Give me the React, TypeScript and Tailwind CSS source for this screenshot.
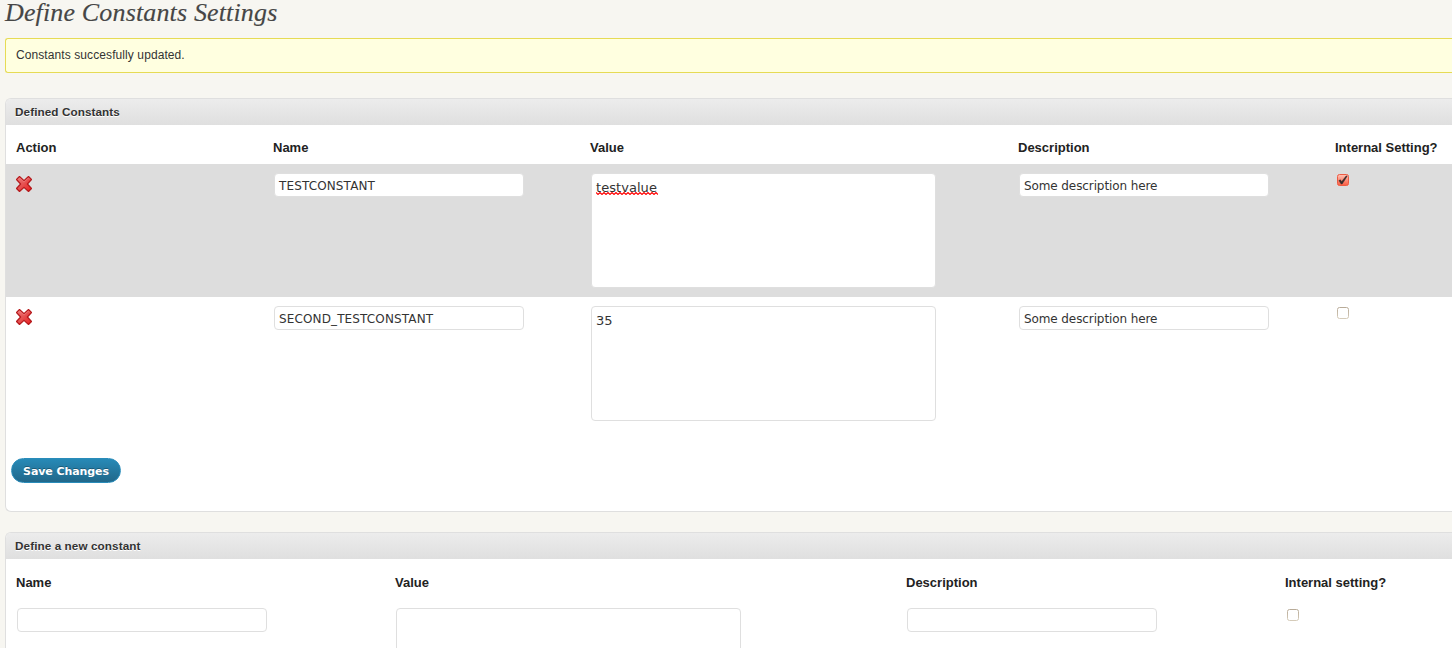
import React from "react";

const SANS = "font-['Liberation_Sans',Arial,sans-serif]";
const DEJAVU = "font-['DejaVu_Sans',Verdana,sans-serif]";

function DeleteIcon() {
  return (
    <svg width="16" height="16" viewBox="0 0 16 16" className="block" role="img" aria-label="Delete">
      <defs>
        <linearGradient id="deleteFill" x1="0" y1="0" x2="1" y2="1">
          <stop offset="0" stopColor="#f08080" />
          <stop offset="0.5" stopColor="#e64f4f" />
          <stop offset="1" stopColor="#ee1c1c" />
        </linearGradient>
      </defs>
      <path
        d="M3.5 .5 L8 4.6 L12.5 .5 L15.5 3.5 L11.4 8 L15.5 12.5 L12.5 15.5 L8 11.4 L3.5 15.5 L.5 12.5 L4.6 8 L.5 3.5 Z"
        fill="url(#deleteFill)"
        stroke="#b5191c"
        strokeWidth="1.2"
        strokeLinejoin="round"
      />
      <path d="M2 3.7 L3.6 2 L8 6.1 L12.4 2 L13.8 3.5" fill="none" stroke="#f08888" strokeWidth=".6" />
    </svg>
  );
}

function Checkbox({ checked = false }: { checked?: boolean }) {
  return (
    <svg width="12" height="12" viewBox="0 0 12 12" className="block" role="checkbox" aria-checked={checked}>
      <defs>
        <linearGradient id="checkedFill" x1="0" y1="0" x2="0" y2="1">
          <stop offset="0" stopColor="#ffc4b7" />
          <stop offset="1" stopColor="#fa5b40" />
        </linearGradient>
        <linearGradient id="uncheckedEdge" x1="0" y1="0" x2="0" y2="1">
          <stop offset="0" stopColor="#b8ab98" />
          <stop offset="1" stopColor="#d5cbb9" />
        </linearGradient>
      </defs>
      <rect
        x=".5"
        y=".5"
        width="11"
        height="11"
        rx="2"
        fill={checked ? "url(#checkedFill)" : "#fff"}
        stroke={checked ? "#ed5a42" : "url(#uncheckedEdge)"}
      />
      {checked && (
        <path
          d="M1.8 6.6 L3.4 5.8 L4.7 7.6 L9.2 1.8 L10.2 2.2 L5.2 10 L4.1 10 Z"
          fill="#3b2c2a"
          stroke="#3b2c2a"
          strokeWidth=".4"
        />
      )}
    </svg>
  );
}

function TextInput({ value = "", tracking = "tracking-normal" }: { value?: string; tracking?: string }) {
  return (
    <div
      role="textbox"
      className={`ml-px h-6 w-[250px] rounded-[4px] border border-[#dfdfdf] bg-white px-1 text-[12px] leading-[24px] whitespace-nowrap text-[#333] ${DEJAVU} ${tracking}`}
    >
      {value}
    </div>
  );
}

// Zigzag underline, four pixels per wave.
const squiggle = "M0 .5" + Array.from({ length: 31 }, (_, i) => `L${i * 2 + 2} ${i % 2 === 0 ? 2.5 : 0.5}`).join("");

function TextArea({ value = "", misspelled = false }: { value?: string; misspelled?: boolean }) {
  return (
    <div
      role="textbox"
      aria-multiline
      className={`ml-px h-[115px] w-[345px] rounded-[4px] border border-[#dfdfdf] bg-white px-1 pt-[5px] text-[13px] leading-[18px] text-[#333] ${DEJAVU}`}
    >
      <span className="relative inline-block tracking-[0.05px]">
        {value}
        {misspelled && (
          <svg width="62" height="3" viewBox="0 0 62 3" className="absolute bottom-[2px] left-0 text-[#ff0000]">
            <path d={squiggle} fill="none" stroke="currentColor" strokeWidth="1.1" />
          </svg>
        )}
      </span>
    </div>
  );
}

function PanelHeader({ children }: { children: React.ReactNode }) {
  return (
    <h3 className="h-[26px] rounded-tl-[5px] bg-linear-to-b from-[#ececec] to-[#dfdfdf] pl-[9px] text-[11.7px] leading-[26px] font-bold text-[#333] [text-shadow:0_1px_0_#fff]">
      <span className="inline-block tracking-[0.1px]">{children}</span>
    </h3>
  );
}

const constants = [
  { name: "TESTCONSTANT", value: "testvalue", description: "Some description here", internal: true },
  { name: "SECOND_TESTCONSTANT", value: "35", description: "Some description here", internal: false },
];

const definedGrid = "grid grid-cols-[257px_317px_428px_317px_1fr]";
const newGrid = "grid grid-cols-[379px_511px_379px_1fr]";
const headCells = "pl-[10px] text-[13px] leading-[18px] font-bold text-[#222] whitespace-nowrap";

export default function App() {
  return (
    <div className={`h-[648px] w-full overflow-hidden bg-[#f7f6f1] pl-[5px] ${SANS}`}>
      <h1 className="h-[38px] text-[26px] leading-[26px] whitespace-nowrap text-[#464646] italic font-['Liberation_Serif',Georgia,serif]">
        <span className="inline-block tracking-[0.15px] [-webkit-text-stroke:0.15px_#464646]">Define Constants Settings</span>
      </h1>

      <div className="h-[35px] rounded-l-[3px] border border-r-0 border-[#e6db55] bg-[#ffffe0] pl-[10px] text-[12px] leading-[33px] text-[#333]">
        <span className="inline-block tracking-[0.09px]">Constants succesfully updated.</span>
      </div>

      <section className="mt-[25px] h-[414px] rounded-l-[6px] border border-r-0 border-[#dfdfdf] bg-white">
        <PanelHeader>Defined Constants</PanelHeader>
        <div className={`${definedGrid} ${headCells} h-[39px] pt-[14px]`}>
          <span>Action</span>
          <span>Name</span>
          <span>Value</span>
          <span>Description</span>
          <span>Internal Setting?</span>
        </div>
        {constants.map((c, i) => (
          <div key={c.name} className={`${definedGrid} h-[133px] pt-[9px] pl-[10px] ${i % 2 === 0 ? "bg-[#ddd]" : "bg-white"}`}>
            <div className="pt-[3px]">
              <DeleteIcon />
            </div>
            <TextInput value={c.name} tracking="tracking-[0.13px]" />
            <TextArea value={c.value} misspelled={c.value === "testvalue"} />
            <TextInput value={c.description} tracking="tracking-[-0.1px]" />
            <div className="pt-px pl-[2px]">
              <Checkbox checked={c.internal} />
            </div>
          </div>
        ))}
        <button
          className={`mt-[28px] ml-[5px] block h-[25px] w-[110px] rounded-full border border-[#298cba] bg-linear-to-b from-[#278ab7] to-[#21678a] pt-px text-[11px] leading-[23px] font-bold whitespace-nowrap text-white [text-shadow:0_-1px_0_rgba(0,0,0,0.3)] ${DEJAVU}`}
        >
          <span className="inline-block tracking-[-0.08px]">Save Changes</span>
        </button>
      </section>

      <section className="mt-5 h-[200px] rounded-l-[6px] border border-r-0 border-[#dfdfdf] bg-white">
        <PanelHeader>Define a new constant</PanelHeader>
        <div className={`${newGrid} ${headCells} h-[49px] pt-[15px]`}>
          <span>Name</span>
          <span>Value</span>
          <span>Description</span>
          <span>Internal setting?</span>
        </div>
        <div className={`${newGrid} pl-[10px]`}>
          <TextInput />
          <TextArea />
          <TextInput />
          <div className="pt-px pl-[2px]">
            <Checkbox />
          </div>
        </div>
      </section>
    </div>
  );
}
